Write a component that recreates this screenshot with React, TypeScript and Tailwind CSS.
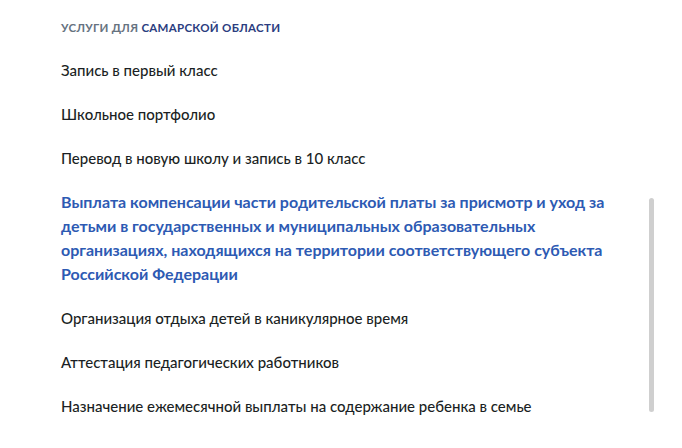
const items = [
  { text: 'Запись в первый класс' },
  { text: 'Школьное портфолио' },
  { text: 'Перевод в новую школу и запись в 10 класс' },
  {
    text: 'Выплата компенсации части родительской платы за присмотр и уход за детьми в государственных и муниципальных образовательных организациях, находящихся на территории соответствующего субъекта Российской Федерации',
    active: true,
  },
  { text: 'Организация отдыха детей в каникулярное время' },
  { text: 'Аттестация педагогических работников' },
  { text: 'Назначение ежемесячной выплаты на содержание ребенка в семье' },
];

export default function App() {
  return (
    <div className="relative h-[448px] w-[682px] overflow-hidden bg-white font-['Lato','Noto_Sans',sans-serif]">
      <div className="pl-[61px] pr-[64px] pt-[21px]">
        <h2 className="text-[11.5px] font-bold uppercase leading-[14px] tracking-[0.3px] text-[#66727f]">
          Услуги для <span className="text-[#2b3d80]">Самарской области</span>
        </h2>
        <ul className="mt-[23px] flex flex-col gap-[20px]">
          {items.map((item) => (
            <li
              key={item.text}
              className={
                'cursor-pointer leading-[24px] ' +
                (item.active
                  ? 'text-[16px] font-bold text-[#2d5ab3]'
                  : 'text-[15px] font-medium text-[#1b1f24]')
              }
            >
              {item.text}
            </li>
          ))}
        </ul>
      </div>
      {/* scrollbar thumb */}
      <div className="absolute left-[649px] top-[198px] h-[214px] w-[5px] rounded-full bg-[#cfcfcf]" />
    </div>
  );
}
